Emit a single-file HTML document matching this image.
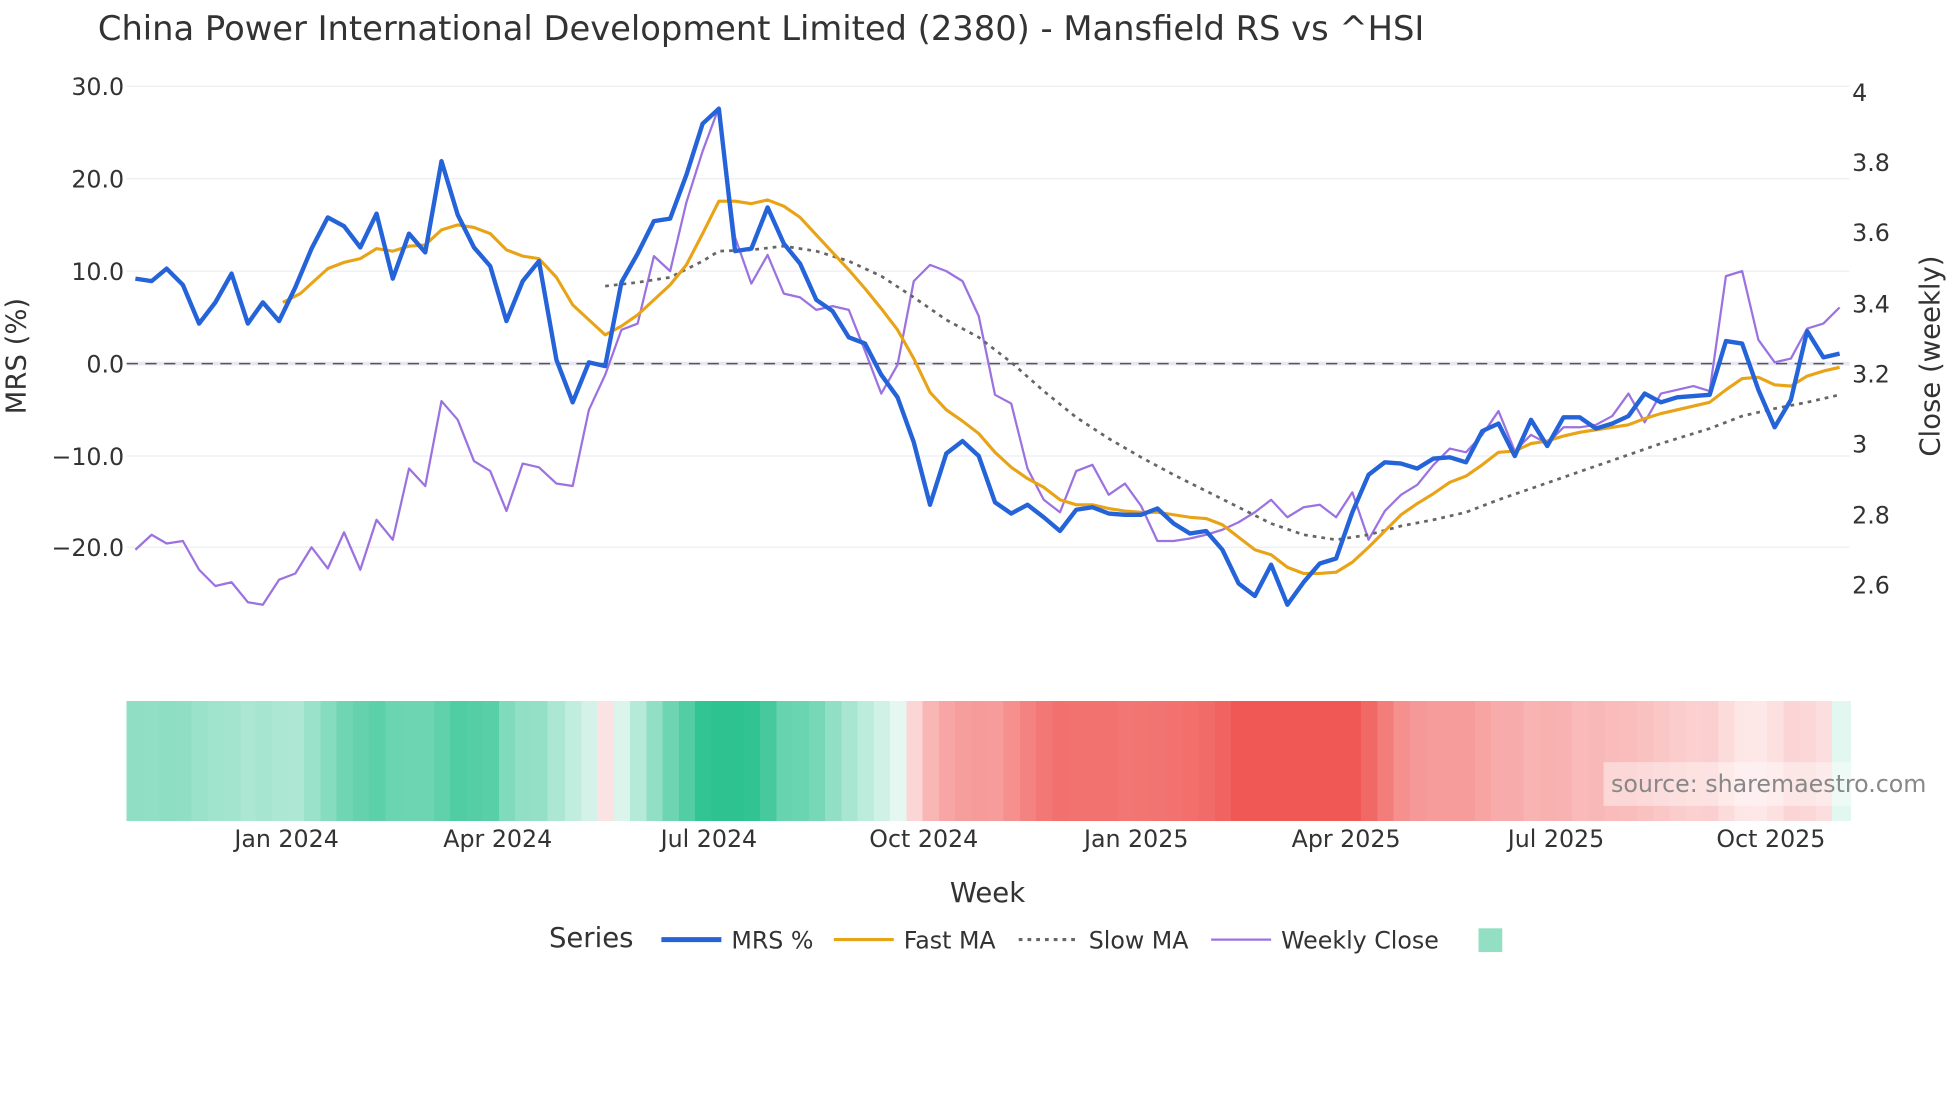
<!DOCTYPE html>
<html><head><meta charset="utf-8"><style>
html,body{margin:0;padding:0;background:#fff;width:1960px;height:1102px;overflow:hidden}
svg{display:block;font-family:"DejaVu Sans","Liberation Sans",sans-serif}
</style></head><body>
<svg id="s" width="1960" height="1102" viewBox="0 0 1568 882" xmlns="http://www.w3.org/2000/svg">
<rect width="1568" height="882" fill="#fff"/>
<text x="78" y="32" font-size="27" fill="#333">China Power International Development Limited (2380) - Mansfield RS vs ^HSI</text>
<g stroke="#eceef2" stroke-width="1">
<line x1="101" x2="1480" y1="69" y2="69"/><line x1="101" x2="1480" y1="143" y2="143"/><line x1="101" x2="1480" y1="217" y2="217"/><line x1="101" x2="1480" y1="365" y2="365"/><line x1="101" x2="1480" y1="438" y2="438"/>
</g>
<line x1="101" x2="1480" y1="291" y2="291" stroke="#e8e8f4" stroke-width="3"/>
<line x1="101" x2="1480" y1="291" y2="291" stroke="#555" stroke-width="1.2" stroke-dasharray="9,6"/>
<g font-size="19" fill="#333" text-anchor="end">
<text x="99" y="76">30.0</text><text x="99" y="150">20.0</text><text x="99" y="224">10.0</text><text x="99" y="298">0.0</text><text x="99" y="372">−10.0</text><text x="99" y="445">−20.0</text>
</g>
<g font-size="19" fill="#333">
<text x="1482" y="81">4</text><text x="1482" y="137">3.8</text><text x="1482" y="193">3.6</text><text x="1482" y="250">3.4</text><text x="1482" y="306">3.2</text><text x="1482" y="362">3</text><text x="1482" y="419">2.8</text><text x="1482" y="475">2.6</text>
</g>
<text transform="translate(20,285) rotate(-90)" font-size="22" fill="#333" text-anchor="middle">MRS (%)</text>
<text transform="translate(1552,285) rotate(-90)" font-size="22" fill="#333" text-anchor="middle">Close (weekly)</text>
<g id="heat" shape-rendering="crispEdges"></g>
<g id="lines"></g>
<rect x="1283" y="610" width="262" height="35" fill="#fff" fill-opacity="0.4"/>
<text x="1289" y="634" font-size="19" fill="#888">source: sharemaestro.com</text>
<g font-size="19" fill="#333" text-anchor="middle">
<text x="229" y="678">Jan 2024</text><text x="398" y="678">Apr 2024</text><text x="567" y="678">Jul 2024</text><text x="739" y="678">Oct 2024</text><text x="909" y="678">Jan 2025</text><text x="1077" y="678">Apr 2025</text><text x="1245" y="678">Jul 2025</text><text x="1417" y="678">Oct 2025</text>
</g>
<text x="790" y="722" font-size="22" fill="#333" text-anchor="middle">Week</text>
<text x="439" y="758" font-size="22" fill="#333">Series</text>
<line x1="529" x2="577" y1="752" y2="752" stroke="#2563d9" stroke-width="4"/>
<text x="585" y="759" font-size="19" fill="#333">MRS %</text>
<line x1="667" x2="715" y1="752" y2="752" stroke="#e8a317" stroke-width="2.5"/>
<text x="723" y="759" font-size="19" fill="#333">Fast MA</text>
<line x1="815" x2="863" y1="752" y2="752" stroke="#666" stroke-width="2.5" stroke-dasharray="3,4"/>
<text x="871" y="759" font-size="19" fill="#333">Slow MA</text>
<line x1="969" x2="1017" y1="752" y2="752" stroke="#9b72e0" stroke-width="1.8"/>
<text x="1025" y="759" font-size="19" fill="#333">Weekly Close</text>
<rect x="1183" y="743" width="19" height="19" fill="#92dfc4"/>
</svg>
<script>
var ns="http://www.w3.org/2000/svg";
function P(a){var r=[];for(var i=0;i<a.length;i+=2)r.push(a[i]+","+a[i+1]);return r.join(" ");}
var mrs=[108,223,121,225,133,215,146,228,159,259,172,242,185,219,198,259,210,242,223,257,236,230,249,199,262,174,275,181,288,198,301,171,314,223,327,187,340,202,353,129,366,172,379,198,392,213,405,257,418,225,431,209,445,288,458,322,471,290,484,293,497,226,510,203,523,177,536,175,549,140,562,99,575,87,588,201,601,199,614,166,627,195,640,211,653,240,666,249,679,270,692,275,705,300,718,318,731,354,744,404,757,363,770,353,783,365,796,402,809,411,822,404,835,414,848,425,861,408,874,406,887,411,900,412,913,412,926,407,939,419,952,427,965,425,978,440,991,467,1004,477,1017,452,1030,484,1043,466,1056,451,1069,447,1082,410,1095,380,1108,370,1121,371,1134,375,1147,367,1160,366,1173,370,1186,345,1199,339,1212,365,1225,336,1238,357,1251,334,1264,334,1277,343,1290,339,1303,333,1316,315,1329,322,1342,318,1355,317,1368,316,1381,273,1394,275,1407,312,1420,342,1433,320,1446,265,1459,286,1472,283];
var fast=[226,242,240,235,262,215,275,210,288,207,301,199,314,201,327,197,340,196,353,184,366,180,379,182,392,187,405,200,418,205,431,207,445,222,458,244,471,256,484,268,497,261,510,252,523,240,536,228,549,212,562,187,575,161,588,161,601,163,614,160,627,165,640,174,653,188,666,202,679,216,692,231,705,247,718,264,731,287,744,314,757,328,770,337,783,347,796,362,809,374,822,383,835,390,848,400,861,404,874,404,887,407,900,409,913,410,926,410,939,412,952,414,965,415,978,420,991,430,1004,440,1017,444,1030,454,1043,459,1056,459,1069,458,1082,450,1095,438,1108,425,1121,412,1134,403,1147,395,1160,386,1173,381,1186,372,1199,362,1212,361,1225,355,1238,353,1251,349,1264,346,1277,344,1290,342,1303,340,1316,335,1329,331,1342,328,1355,325,1368,322,1381,312,1394,303,1407,302,1420,308,1433,309,1446,301,1459,297,1472,294];
var slow=[484,229,510,226,536,222,562,209,575,201,601,200,627,197,653,201,679,209,705,221,731,238,757,256,783,270,809,290,835,313,861,334,887,351,913,366,939,380,965,393,991,406,1017,419,1043,428,1069,432,1095,428,1121,421,1147,416,1173,410,1199,400,1225,391,1251,382,1277,373,1303,364,1329,355,1355,347,1368,343,1394,333,1420,327,1446,322,1472,316];
var close=[108,440,121,428,133,435,146,433,159,456,172,469,185,466,198,482,210,484,223,464,236,459,249,438,262,455,275,426,288,456,301,416,314,432,327,375,340,389,353,321,366,336,379,369,392,377,405,409,418,371,431,374,445,387,458,389,471,328,484,300,497,264,510,259,523,205,536,217,549,162,562,121,575,86,588,190,601,227,614,204,627,235,640,238,653,248,666,245,679,248,692,281,705,315,718,292,731,225,744,212,757,217,770,225,783,253,796,316,809,323,822,375,835,400,848,410,861,377,874,372,887,396,900,387,913,405,926,433,939,433,952,431,965,428,978,424,991,418,1004,410,1017,400,1030,414,1043,406,1056,404,1069,414,1082,394,1095,432,1108,409,1121,396,1134,388,1147,372,1160,359,1173,362,1186,348,1199,329,1212,361,1225,348,1238,355,1251,342,1264,342,1277,340,1290,333,1303,315,1316,338,1329,315,1342,312,1355,309,1368,313,1381,221,1394,217,1407,272,1420,290,1433,287,1446,263,1459,259,1472,246];
var L=document.getElementById("lines");
function pl(a,c,w,d){var e=document.createElementNS(ns,"polyline");e.setAttribute("points",P(a));e.setAttribute("fill","none");e.setAttribute("stroke",c);e.setAttribute("stroke-width",w);e.setAttribute("stroke-linejoin","round");if(d)e.setAttribute("stroke-dasharray",d);L.appendChild(e);}
pl(close,"#9b72e0",1.8);
pl(slow,"#666",2.2,"3,4");
pl(fast,"#e8a317",2.5);
pl(mrs,"#2563d9",3.5);
var H=document.getElementById("heat");
var vals=[];for(var i=1;i<mrs.length;i+=2)vals.push((291-mrs[i])/7.4);
var sm=[];for(var i=0;i<vals.length;i++){var s=0,n=0;for(var j=Math.max(0,i-3);j<=i;j++){s+=vals[j];n++;}sm.push(s/n);}
function mix(c,a){return "rgb("+c.map(function(v){return Math.round(255+(v-255)*a);}).join(",")+")";}
for(var i=0;i<vals.length;i++){var x0=i==0?101:Math.round((mrs[2*i-2]+mrs[2*i])/2);var x1=i==vals.length-1?1480:Math.round((mrs[2*i]+mrs[2*i+2])/2);
var v=sm[i];var a=Math.min(Math.abs(v)/20,1)*0.85+0.12;var r=document.createElementNS(ns,"rect");
r.setAttribute("x",x0);r.setAttribute("y",561);r.setAttribute("width",x1-x0+1);r.setAttribute("height",96);
r.setAttribute("fill",mix(v>=0?[38,192,140]:[239,83,80],a));H.appendChild(r);}
</script>
</body></html>
